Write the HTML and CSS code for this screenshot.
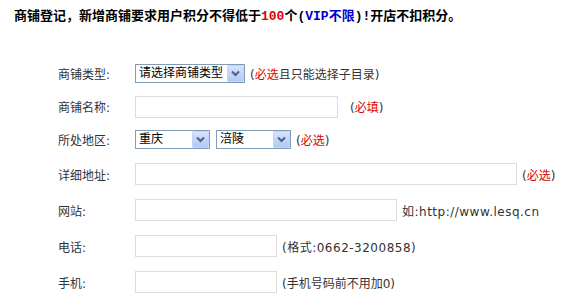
FILE: index.html
```html
<!DOCTYPE html>
<html lang="zh-CN">
<head>
<meta charset="utf-8">
<title>商铺登记</title>
<link rel="stylesheet" href="styles.css">
</head>
<body>
<div class="page">
  <h1 class="notice">商铺登记，新增商铺要求用户积分不得低于<span class="num">100</span>个(<span class="vip">VIP不限</span>)!开店不扣积分。</h1>
  <form class="form">
    <div class="row r-sm">
      <label class="lbl">商铺类型:</label>
      <div class="ctl">
        <span class="sel w-type"><select><option>请选择商铺类型</option></select><svg class="arrow" width="17" height="17" viewBox="0 0 17 17"><defs><linearGradient id="g1" x1="0" y1="0" x2="0" y2="1"><stop offset="0" stop-color="#d7e3fe"/><stop offset="1" stop-color="#b3c7f5"/></linearGradient></defs><rect x="0.5" y="0.5" width="16" height="16" rx="1" fill="url(#g1)" stroke="#c3d3fb"/><path d="M5 6.5 L8.5 10 L12 6.5" fill="none" stroke="#4d6185" stroke-width="2"/></svg></span>
        <span class="note">(<em>必选</em>且只能选择子目录)</span>
      </div>
    </div>
    <div class="row r-sm">
      <label class="lbl">商铺名称:</label>
      <div class="ctl">
        <input class="inp w-name" type="text">
        <span class="note wide">(<em>必填</em>)</span>
      </div>
    </div>
    <div class="row r-sm">
      <label class="lbl">所处地区:</label>
      <div class="ctl">
        <span class="sel w-area"><select><option>重庆</option></select><svg class="arrow" width="17" height="17" viewBox="0 0 17 17"><defs><linearGradient id="g2" x1="0" y1="0" x2="0" y2="1"><stop offset="0" stop-color="#d7e3fe"/><stop offset="1" stop-color="#b3c7f5"/></linearGradient></defs><rect x="0.5" y="0.5" width="16" height="16" rx="1" fill="url(#g2)" stroke="#c3d3fb"/><path d="M5 6.5 L8.5 10 L12 6.5" fill="none" stroke="#4d6185" stroke-width="2"/></svg></span>
        <span class="sel w-area gap"><select><option>涪陵</option></select><svg class="arrow" width="17" height="17" viewBox="0 0 17 17"><defs><linearGradient id="g3" x1="0" y1="0" x2="0" y2="1"><stop offset="0" stop-color="#d7e3fe"/><stop offset="1" stop-color="#b3c7f5"/></linearGradient></defs><rect x="0.5" y="0.5" width="16" height="16" rx="1" fill="url(#g3)" stroke="#c3d3fb"/><path d="M5 6.5 L8.5 10 L12 6.5" fill="none" stroke="#4d6185" stroke-width="2"/></svg></span>
        <span class="note">(<em>必选</em>)</span>
      </div>
    </div>
    <div class="row">
      <label class="lbl">详细地址:</label>
      <div class="ctl">
        <input class="inp w-addr" type="text">
        <span class="note">(<em>必选</em>)</span>
      </div>
    </div>
    <div class="row">
      <label class="lbl">网站:</label>
      <div class="ctl">
        <input class="inp w-site" type="text">
        <span class="note latin">如:http://www.lesq.cn</span>
      </div>
    </div>
    <div class="row">
      <label class="lbl">电话:</label>
      <div class="ctl">
        <input class="inp w-tel" type="text">
        <span class="note latin">(格式:0662-3200858)</span>
      </div>
    </div>
    <div class="row">
      <label class="lbl">手机:</label>
      <div class="ctl">
        <input class="inp w-tel" type="text">
        <span class="note">(手机号码前不用加0)</span>
      </div>
    </div>
  </form>
</div>
</body>
</html>
```
FILE: styles.css
```css
* { box-sizing: border-box; }

body {
  margin: 0;
  background: #fff;
  font-family: "DejaVu Sans", "Noto Sans CJK SC", sans-serif;
  font-size: 12px;
  color: #333;
}

.notice {
  margin: 7px 0 0 14px;
  font-family: "Liberation Mono", "Noto Sans CJK SC", monospace;
  font-size: 13px;
  line-height: 20px;
  font-weight: bold;
  color: #000;
}

.num { color: #d00; }
.vip { color: #00c; }

.form {
  margin-top: 30px;
  padding-left: 58px;
}

.row {
  display: flex;
  align-items: center;
  height: 36px;
}

.row.r-sm { height: 33px; }

.lbl {
  width: 77px;
  flex: none;
}

.ctl {
  display: flex;
  align-items: center;
}

.inp {
  height: 22px;
  border: 1px solid #dcdcdc;
  background: #fff;
  padding: 0 2px;
  font: inherit;
}

.w-name { width: 203px; }
.w-addr { width: 382px; }
.w-site { width: 262px; }
.w-tel { width: 142px; }

.sel {
  position: relative;
  display: inline-block;
  height: 19px;
}

.sel select {
  appearance: none;
  -webkit-appearance: none;
  width: 100%;
  height: 19px;
  border: 1px solid #7f9db9;
  background: #fff;
  font: inherit;
  color: #000;
  padding: 0 0 0 3px;
  line-height: 17px;
  border-radius: 0;
}

.sel .arrow {
  position: absolute;
  right: 1px;
  top: 1px;
  pointer-events: none;
}

.w-type { width: 110px; }
.w-area { width: 75px; }
.sel.gap { margin-left: 6px; }

.note {
  margin-left: 5px;
  white-space: nowrap;
}

.note.wide { margin-left: 12px; }
.note.latin { letter-spacing: 0.5px; }

.note em {
  font-style: normal;
  color: #d00;
}
```
